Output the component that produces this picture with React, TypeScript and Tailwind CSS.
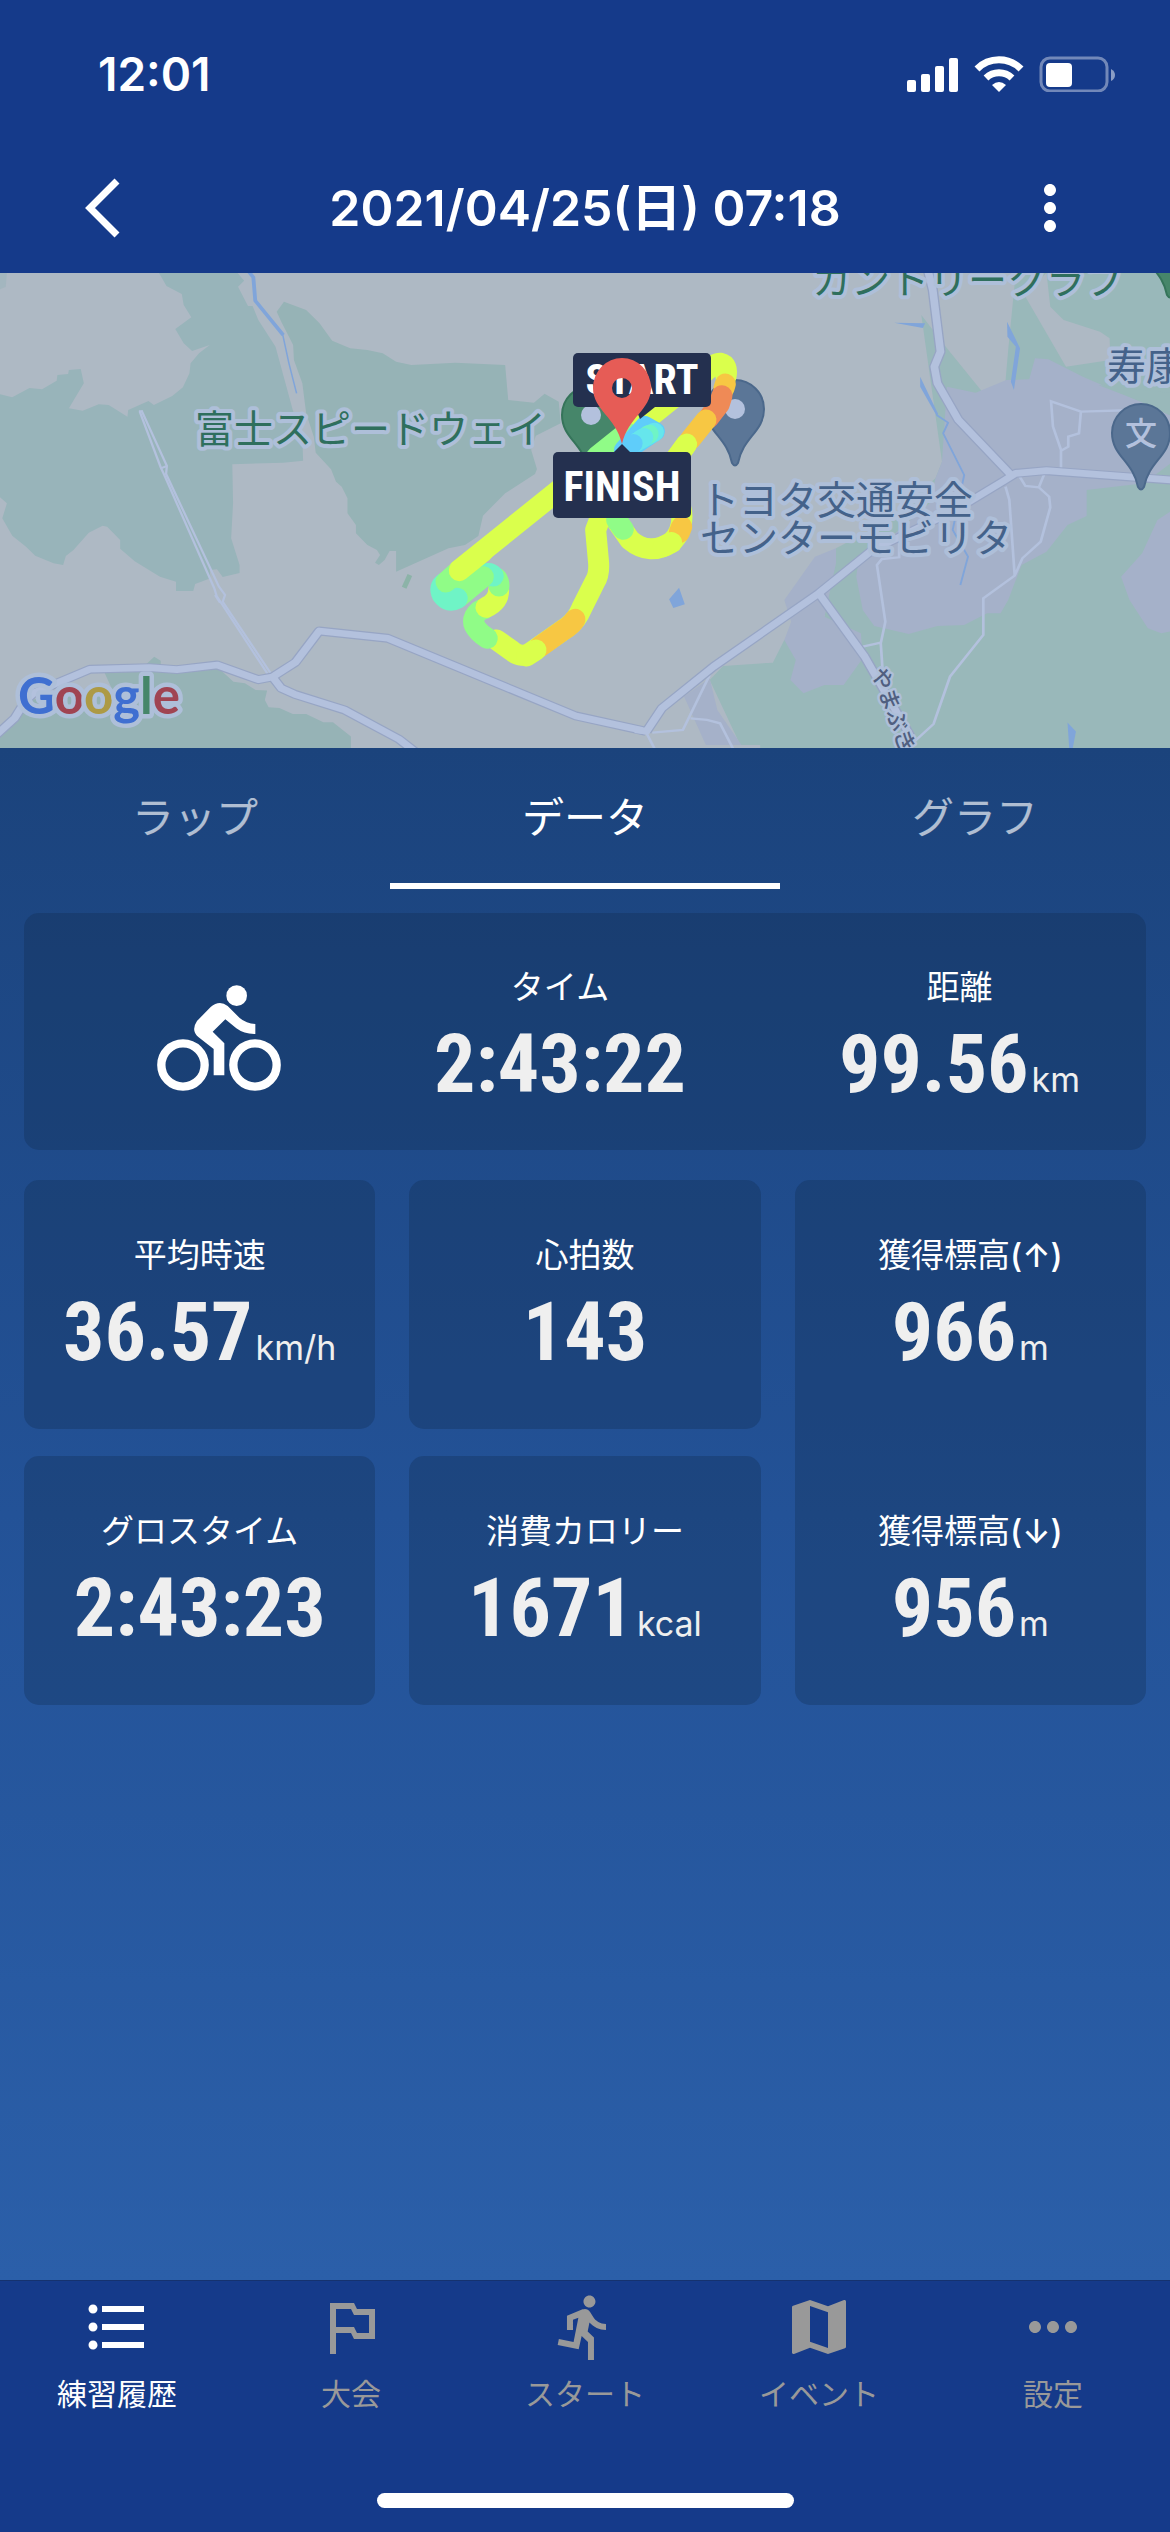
import type { ReactNode } from 'react'
import type { IconType } from 'react-icons'
import {
  MdDirectionsRun,
  MdFormatListBulleted,
  MdMap,
  MdMoreHoriz,
  MdMoreVert,
  MdOutlinedFlag,
} from 'react-icons/md'

const TABS = ['ラップ', 'データ', 'グラフ']
const ACTIVE_TAB = 'データ'

const NAV_ITEMS: { label: string; icon: IconType; active?: boolean }[] = [
  { label: '練習履歴', icon: MdFormatListBulleted, active: true },
  { label: '大会', icon: MdOutlinedFlag },
  { label: 'スタート', icon: MdDirectionsRun },
  { label: 'イベント', icon: MdMap },
  { label: '設定', icon: MdMoreHoriz },
]

function StatusIcons() {
  return (
    <svg className="h-[36px] w-[208px]" viewBox="0 0 208 36" fill="white" aria-hidden="true">
      <rect x="0" y="24" width="9" height="12" rx="2" />
      <rect x="14" y="18" width="9" height="18" rx="2" />
      <rect x="28" y="10" width="9" height="26" rx="2" />
      <rect x="42" y="2" width="9" height="34" rx="2" />
      <g fill="none" stroke="white" strokeWidth="7">
        <path d="M70 13A31 31 0 0 1 114 13" />
        <path d="M79 22A19 19 0 0 1 105 22" />
      </g>
      <path d="M85 29Q92 23 99 29L92 36Z" />
      <rect x="134" y="2" width="66" height="33" rx="9" fill="none" stroke="white" strokeOpacity="0.4" strokeWidth="3" />
      <rect x="139" y="7" width="26" height="24" rx="4" />
      <path d="M204 13Q208 15 208 19Q208 23 204 25Z" fillOpacity="0.5" />
    </svg>
  )
}

function CyclistIcon() {
  return (
    <svg className="h-[106px] w-[124px]" viewBox="0 0 372 318" fill="white" aria-label="バイク" role="img">
      <circle cx="239" cy="32" r="31" />
      <g fill="none" stroke="white" strokeWidth="25">
        <circle cx="78" cy="240" r="65" />
        <circle cx="294" cy="240" r="65" />
      </g>
      <path d="M170 271V192L124 156Q101 136 120 108L161 66Q187 44 212 63L248 99Q268 116 295 117V147Q262 148 238 130L205 103L167 140L202 175V271Z" />
    </svg>
  )
}

function PlacePin({ x, y, fill, edge, dot = true }: { x: number; y: number; fill: string; edge: string; dot?: boolean }) {
  return (
    <g transform={`translate(${x} ${y})`}>
      <path
        d="M-29 0A29 29 0 1 1 29 0C29 23 8 28 3 54Q0 59 -3 54C-8 28 -29 23 -29 0Z"
        fill={fill}
        stroke={edge}
        strokeWidth="2"
      />
      {dot && <circle r="10" fill="#b3c1dd" />}
    </g>
  )
}

function Track({ d, color }: { d: string; color: string }) {
  return <path d={d} stroke={color} />
}

function CourseMap() {
  return (
    <svg
      className="block h-[475px] w-full bg-[#aeb9c4]"
      viewBox="0 0 1170 475"
      preserveAspectRatio="xMidYMid slice"
      role="img"
      aria-label="コースマップ"
    >
      {/* west side */}
      <g transform="translate(0 -3) scale(0.3827 0.3333)">
        <path
          fill="#98b4ba"
          d="M415 8L435 48L475 72L480 105L500 142L458 177L480 220L502 243L548 225L520 250L498 280L495 310L478 352L450 378L402 405L388 393L335 420L333 440L284 405L258 403L216 422L180 415L219 340L211 297L180 300L178 312L150 315L148 332L110 358L77 354L32 382L0 373V682L18 700L6 745L32 797L68 830L92 857L140 880L165 885L172 858L192 840L232 788L268 767L280 770L314 810V836L352 874L418 920L460 935V963H505L510 942L550 925L548 900L567 898L582 921L626 909V885L604 805L609 700L607 583L740 578L792 572L790 500L765 420L720 230L675 150L660 108L648 108L622 50L638 32L620 8Z"
        />
        <path
          fill="#96b3b6"
          d="M742 95L800 120L835 160L868 212L915 235L960 240L1000 250L1035 275L1075 285L1190 278L1320 285L1328 390L1395 398L1423 371L1460 395L1465 460L1400 497L1388 540L1403 597L1398 612L1320 670L1262 737L1250 798L1215 825L1172 835L1035 905V843H1018L1005 870L990 885L980 878L993 855L985 840L960 825L930 790V765L908 730V685L893 650L878 635L865 598L825 548L820 500L800 430L790 340L768 270L766 225L735 155L723 125ZM272 1205L567 1190L610 1235L640 1240L668 1260L698 1262L692 1290L702 1312L730 1314L765 1332H800L845 1357H870L917 1400V1445H0V1395L60 1330L80 1290L290 1250ZM375 1190L403 1160L420 1172V1195Z"
        />
        <path fill="#8cb3a8" d="M1065 912L1077 918L1062 956L1050 950Z" />
        <path fill="#98b4ba" d="M0 8H18L15 50L0 58Z" opacity="0.5" />
        <g fill="none" stroke="#80a5da">
          <path d="M650 5L662 22L667 92L740 195" strokeWidth="10" />
          <path d="M738 190L755 280L775 370" strokeWidth="4" />
        </g>
        <g fill="none" stroke="#b3c1dd" strokeWidth="6">
          <path d="M365 424L420 592L428 612L560 955L566 978L705 1222" />
          <path d="M370 422L436 588L434 612L572 950L588 975L582 995L712 1218" />
          <path d="M363 424L373 424M420 595L436 588M562 975L575 998" />
        </g>
        <g fill="none" strokeLinejoin="round">
          <g stroke="#97a5c4" strokeWidth="27">
            <path d="M-10 1395L38 1345L68 1290L90 1268L235 1198L390 1193L462 1199L567 1185L675 1229L712 1221L772 1177L834 1083L1013 1105L1505 1338L1688 1384" />
            <path d="M712 1221L735 1255L770 1273L900 1320L1043 1408L1090 1450" />
          </g>
          <g stroke="#b3c1dd" strokeWidth="20">
            <path d="M-10 1395L38 1345L68 1290L90 1268L235 1198L390 1193L462 1199L567 1185L675 1229L712 1221L772 1177L834 1083L1013 1105L1505 1338L1688 1384" />
            <path d="M712 1221L735 1255L770 1273L900 1320L1043 1408L1090 1450" />
          </g>
        </g>
      </g>

      {/* east side */}
      <g transform="translate(570 -3) scale(0.3827 0.3333)">
        <path
          fill="#99b8ba"
          d="M1165 5H1575V1445H497V1425H445L365 1230L400 1188L530 1178L560 1110L665 1040L695 835L820 760L955 625L972 575L918 135L985 235L1082 372H1135L1145 240Z"
        />
        <path fill="#aeb9c4" d="M1190 80L1245 8L1255 110L1290 150L1385 185L1410 205L1412 270L1296 290Z" />
        <path
          fill="#a5b1c9"
          d="M985 350L1060 368L1140 330L1200 328L1215 265L1250 268L1340 320L1500 400L1575 440V575L1500 640L1350 660V738L1300 765L1245 845L1180 885L1145 990L1125 1030H1090L1030 1065L960 1068L885 1092L795 1068L765 1020L748 920L755 860L850 790L940 700L955 625L972 575ZM560 990L640 860L695 835V880L665 1040L760 1090L765 1165L715 1245H665L610 1270L576 1230L590 1170L560 1110L578 1055ZM1575 720L1535 750L1495 850L1440 920L1462 990L1510 1075L1545 1090L1575 1083ZM298 1280L365 1225L385 1320L448 1425H355Z"
        />
        <path fill="#99b8ba" d="M1380 345L1575 370V440L1500 398Z" />
        <path
          fill="#80a5da"
          d="M847 158L928 160L922 174ZM1142 155L1176 235L1160 360L1152 335L1165 230L1143 200ZM915 320L962 432L958 437L915 350ZM285 953L300 1003L270 1014L259 988ZM1300 1358L1322 1385L1312 1445H1305Z"
        />
        <path d="M958 435L988 458L975 490L1030 615L1000 780L1040 860L1020 945" fill="none" stroke="#80a5da" strokeWidth="5" />
        <g fill="none" stroke="#b3c1dd" strokeWidth="7">
          <path d="M1480 420L1335 425L1257 394L1262 470L1283 540V600M1335 425L1330 490L1302 500V530L1283 542" />
          <path d="M1175 620L1190 648L1225 652L1252 680L1255 712L1230 815L1182 865L1162 917L1080 985V1095L993 1220L950 1362L895 1420M1240 610L1225 652M1138 650L1148 690L1162 917" />
          <path d="M860 820V862L815 867L802 885L824 1055L812 1120L818 1220M765 1130L812 1118" />
          <path d="M365 1215L295 1380L215 1388M315 1345L358 1350L392 1360L430 1445M200 1390L225 1445" />
        </g>
        <g fill="none" strokeLinejoin="round">
          <g stroke="#97a5c4" strokeWidth="27">
            <path d="M935 0L948 60L968 245L952 290L960 340L1015 450L1152 615" />
            <path d="M1580 631L1245 602L1165 610L1130 635L1000 725L790 840L650 970L375 1190L240 1315L200 1384" />
            <path d="M650 970L770 1160L890 1400" />
          </g>
          <g stroke="#b3c1dd" strokeWidth="20">
            <path d="M935 0L948 60L968 245L952 290L960 340L1015 450L1152 615" />
            <path d="M1580 631L1245 602L1165 610L1130 635L1000 725L790 840L650 970L375 1190L240 1315L200 1384L170 1379" />
            <path d="M650 970L770 1160L890 1400" />
          </g>
        </g>
      </g>

      <PlacePin x={591} y={142} fill="#46866a" edge="#35745a" />
      <PlacePin x={735} y={136} fill="#5b7697" edge="#4b688b" />
      <PlacePin x={1141} y={160} fill="#5b7697" edge="#4b688b" dot={false} />
      <PlacePin x={1170} y={-32} fill="#46866a" edge="#35745a" />

      <g
        className="font-['Noto_Sans_CJK_JP',sans-serif] text-[39px]"
        stroke="#aebfd9"
        strokeWidth="8"
        strokeLinejoin="round"
        style={{ paintOrder: 'stroke' }}
      >
        <g fill="#2f6f5d">
          <text x="195" y="170">富士スピードウェイ</text>
          <text x="812" y="21">カントリークラブ</text>
        </g>
        <g fill="#44628a">
          <text x="700" y="241">トヨタ交通安全</text>
          <text x="700" y="279">センターモビリタ</text>
          <text x="1107" y="107">寿康</text>
        </g>
        <text x="871" y="398" transform="rotate(70 871 398)" fill="#505f80" strokeWidth="5" className="text-[22px] font-medium">
          やまぶき
        </text>
      </g>
      <text x="1141" y="172" textAnchor="middle" fill="#b3c1dd" className="font-['Noto_Sans_CJK_JP',sans-serif] text-[32px] font-medium">
        文
      </text>

      {/* speed-coloured course */}
      <g transform="translate(400 57) scale(0.3333)" fill="none" strokeWidth="63" strokeLinecap="round" strokeLinejoin="round">
        <Track color="#daff4c" d="M175 722L900 140Q940 98 962 100Q985 105 978 140" />
        <Track color="#90fc87" d="M590 380L680 308" />
        <Track color="#daff4c" d="M290 930L335 962Q365 988 395 966L505 889Q530 870 545 835L585 755Q598 735 596 700L587 600L610 540" />
        <Track color="#daff4c" d="M860 342L780 450Q845 500 846 560Q845 610 815 636Q750 680 690 630L655 580" />
        <Track color="#f7c743" d="M976 162L972 175M845 590L838 608" />
        <Track color="#ef8a56" d="M966 197L958 222L925 265" />
        <Track color="#f7c743" d="M918 270L870 330" />
        <Track color="#daff4c" d="M860 342L790 440M815 638L790 650" />
        <Track color="#90fc87" d="M670 598L650 570" />
        <Track color="#f7c743" d="M525 868Q515 885 490 900L420 950" />
        <Track color="#daff4c" d="M408 960L380 978" />
        <Track color="#90fc87" d="M262 925Q210 890 224 860Q235 840 250 838" />
        <Track color="#daff4c" d="M258 832Q296 815 296 780" />
        <Track color="#90fc87" d="M297 768Q297 755 290 745" />
        <Track color="#6ff4c6" d="M280 738Q265 722 245 740" />
        <Track color="#90fc87" d="M250 740L175 802" />
        <Track color="#6ff4c6" d="M172 805Q145 820 127 795Q115 770 135 758" />
        <Track color="#90fc87" d="M138 756L165 732" />
        <Track color="#daff4c" d="M178 722L250 664" />
        <g strokeWidth="56">
          <Track color="#5fcdfa" d="M670 360L735 286L767 304L700 350" />
          <Track color="#66e6ec" d="M764 306L710 336" />
          <Track color="#6ff4c6" d="M748 312L742 316" />
          <Track color="#66e6ec" d="M732 322L722 328" />
          <Track color="#5fcdfa" d="M700 340L690 350" />
        </g>
      </g>

      {/* start / finish markers */}
      <g className="font-['Roboto_Condensed',Roboto,sans-serif] text-[42px] font-bold" textAnchor="middle">
        <path d="M635 134H655L640 146Z" fill="#24304f" />
        <rect x="573" y="80" width="138" height="54" rx="5" fill="#24304f" />
        <text x="642" y="121" fill="white">START</text>
        <path
          d="M593 115A29 30 0 1 1 651 115C651 137 628 144 622 171C616 144 593 137 593 115ZM612 115A10 10 0 1 0 632 115A10 10 0 1 0 612 115Z"
          fill="#e65c56"
          fillRule="evenodd"
        />
        <path d="M613 180L622 171L631 180Z" fill="#24304f" />
        <rect x="553" y="179" width="138" height="66" rx="5" fill="#24304f" />
        <text x="622" y="228" fill="white">FINISH</text>
      </g>

      <text
        x="18"
        y="441"
        stroke="#aebfd9"
        strokeWidth="9"
        strokeLinejoin="round"
        style={{ paintOrder: 'stroke' }}
        className="font-[Lato,sans-serif] text-[51px] font-bold"
      >
        <tspan fill="#3f6fd1">G</tspan>
        <tspan fill="#a04452">o</tspan>
        <tspan fill="#ad9a45">o</tspan>
        <tspan fill="#3f6fd1">g</tspan>
        <tspan fill="#46866a">l</tspan>
        <tspan fill="#a04452">e</tspan>
      </text>
    </svg>
  )
}

function Card({ className = '', children }: { className?: string; children: ReactNode }) {
  return <div className={`rounded-[15px] bg-[#0f2a4d]/30 ${className}`}>{children}</div>
}

function Stat({ label, mark, value, unit }: { label: string; mark?: string; value: string; unit?: string }) {
  return (
    <dl className="flex flex-col items-center gap-[4px]">
      <dt className="text-[33px] leading-[48px] whitespace-nowrap text-white">
        {label}
        {mark && <span className="font-medium">{mark}</span>}
      </dt>
      <dd className="flex items-baseline gap-[3px] whitespace-nowrap text-[#efefef]">
        <span className="font-['Roboto_Condensed',Roboto,sans-serif] text-[82px] leading-[98px] font-bold">{value}</span>
        {unit && <span className="text-[34px]">{unit}</span>}
      </dd>
    </dl>
  )
}

export default function App() {
  return (
    <div className="flex min-h-screen flex-col bg-[#153a8a] font-[Inter,'Noto_Sans_CJK_JP',sans-serif] text-white">
      <header>
        <div className="flex h-[141px] items-center justify-between pt-[7px] pr-[55px] pl-[98px]">
          <time className="text-[46px] font-semibold">12:01</time>
          <StatusIcons />
        </div>
        <div className="grid h-[132px] grid-cols-[1fr_auto_1fr] items-center pt-[2px] pr-[84px] pl-[84px]">
          <button type="button" aria-label="戻る" className="flex size-[72px] items-center">
            <svg className="h-[60px] w-[36px]" viewBox="0 0 36 60" fill="none" stroke="white" strokeWidth="7">
              <path d="M33 3L6 30L33 57" />
            </svg>
          </button>
          <h1 className="text-[50px] font-semibold whitespace-nowrap">2021/04/25(日) 07:18</h1>
          <button type="button" aria-label="メニュー" className="justify-self-end">
            <MdMoreVert className="size-[72px]" />
          </button>
        </div>
      </header>

      <CourseMap />

      <main className="flex-1 bg-linear-to-b from-[#1b437c] via-[#235297] via-50% to-[#2b5fa9]">
        <div role="tablist" className="grid grid-cols-3">
          {TABS.map((tab) => (
            <button
              key={tab}
              type="button"
              role="tab"
              aria-selected={tab === ACTIVE_TAB}
              className={`h-[141px] border-b-[6px] pt-[4px] text-[42px] ${
                tab === ACTIVE_TAB ? 'border-white text-white' : 'border-transparent text-white/65'
              }`}
            >
              {tab}
            </button>
          ))}
        </div>

        <div className="px-6 pt-6">
          <Card className="flex h-[237px] items-center justify-between pt-[12px] pr-[66px] pl-[133px]">
            <CyclistIcon />
            <Stat label="タイム" value="2:43:22" />
            <Stat label="距離" value="99.56" unit="km" />
          </Card>

          <div className="mt-[30px] grid grid-cols-3 grid-rows-[249px_249px] gap-x-[34px] gap-y-[27px]">
            <Card className="pt-[51px]">
              <Stat label="平均時速" value="36.57" unit="km/h" />
            </Card>
            <Card className="pt-[51px]">
              <Stat label="心拍数" value="143" />
            </Card>
            <Card className="row-span-2 grid grid-rows-[249px_249px] gap-y-[27px]">
              <div className="pt-[51px]">
                <Stat label="獲得標高" mark="(↑)" value="966" unit="m" />
              </div>
              <div className="pt-[51px]">
                <Stat label="獲得標高" mark="(↓)" value="956" unit="m" />
              </div>
            </Card>
            <Card className="pt-[51px]">
              <Stat label="グロスタイム" value="2:43:23" />
            </Card>
            <Card className="pt-[51px]">
              <Stat label="消費カロリー" value="1671" unit="kcal" />
            </Card>
          </div>
        </div>
      </main>

      <nav className="border-t border-[#15326f] pt-[10px]">
        <div className="grid grid-cols-5">
          {NAV_ITEMS.map(({ label, icon: Icon, active }) => (
            <button
              key={label}
              type="button"
              className={`flex flex-col items-center gap-[10px] ${active ? 'text-white' : 'text-[#999999]'}`}
            >
              <Icon className="size-[72px]" />
              <span className="text-[30px] leading-[42px]">{label}</span>
            </button>
          ))}
        </div>
        <div className="mx-auto mt-[78px] mb-6 h-[15px] w-[417px] rounded-full bg-white" />
      </nav>
    </div>
  )
}
